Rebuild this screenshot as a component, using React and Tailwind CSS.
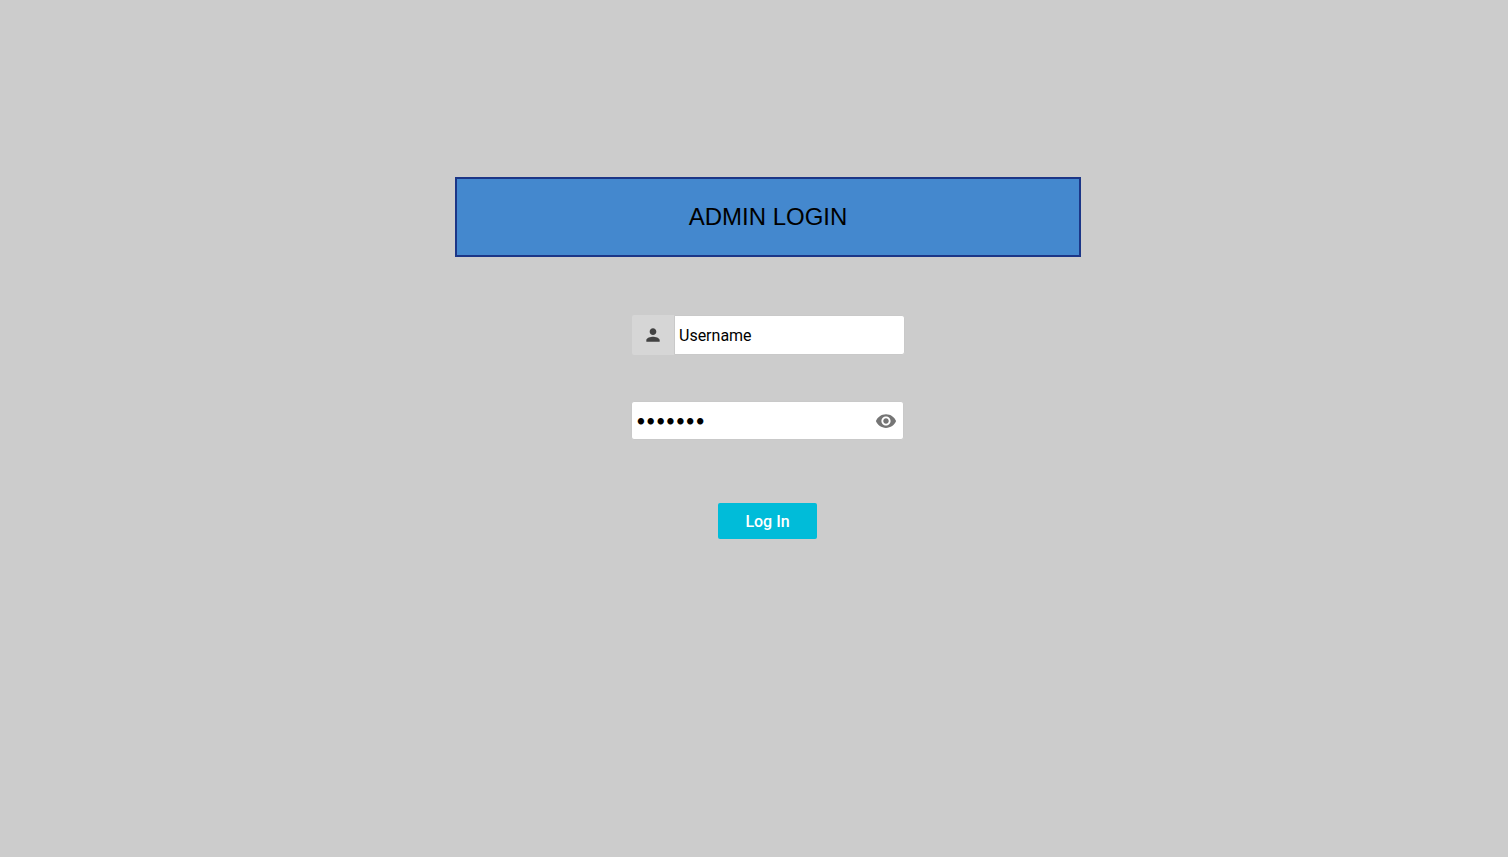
import { useState } from "react";
import { MdPerson, MdVisibility } from "react-icons/md";

export default function App() {
  const [username, setUsername] = useState("Username");
  const [password, setPassword] = useState("1234567");
  const [visible, setVisible] = useState(false);

  return (
    <main className="flex min-h-screen flex-col items-center bg-[#cccccc] pt-[177px] pl-7 font-['Roboto',sans-serif] text-base text-black">
      <h1 className="flex h-20 w-full max-w-[626px] items-center justify-center border-2 border-[#1c3687] bg-[#4488ce] font-['Liberation_Sans',sans-serif] text-2xl">
        ADMIN LOGIN
      </h1>
      <form
        className="flex w-[274px] flex-col pt-[58px]"
        onSubmit={(event) => event.preventDefault()}
      >
        <div className="flex h-10 w-[273px] self-end">
          <label
            htmlFor="username"
            className="flex w-[42px] shrink-0 items-center justify-center rounded-l-xs bg-[#d6d6d6]"
          >
            <MdPerson className="size-5 text-[#424242]" title="Username" />
          </label>
          <input
            id="username"
            type="text"
            value={username}
            onChange={(event) => setUsername(event.target.value)}
            className="min-w-0 flex-1 rounded-r-[3px] border border-[#c9c9c9] bg-white px-1 pt-0.5 outline-none"
          />
        </div>
        <div className="mt-[46px] flex w-[273px] flex-col items-center">
          <div className="flex h-[39px] w-full items-center rounded-[3px] border border-[#c9c9c9] bg-white pr-[6px] pl-1">
            <input
              id="password"
              aria-label="Password"
              type={visible ? "text" : "password"}
              value={password}
              onChange={(event) => setPassword(event.target.value)}
              className="h-full min-w-0 flex-1 bg-transparent font-['Lato',sans-serif] text-[17px] outline-none"
            />
            <button
              type="button"
              aria-label="Show password"
              onClick={() => setVisible(!visible)}
              className="text-[#757575]"
            >
              <MdVisibility className="size-[22px]" aria-hidden="true" />
            </button>
          </div>
          <button
            type="submit"
            className="mt-[63px] h-9 w-[99px] rounded-xs bg-[#00bcd9] pt-0.5 font-medium text-white"
          >
            Log In
          </button>
        </div>
      </form>
    </main>
  );
}
